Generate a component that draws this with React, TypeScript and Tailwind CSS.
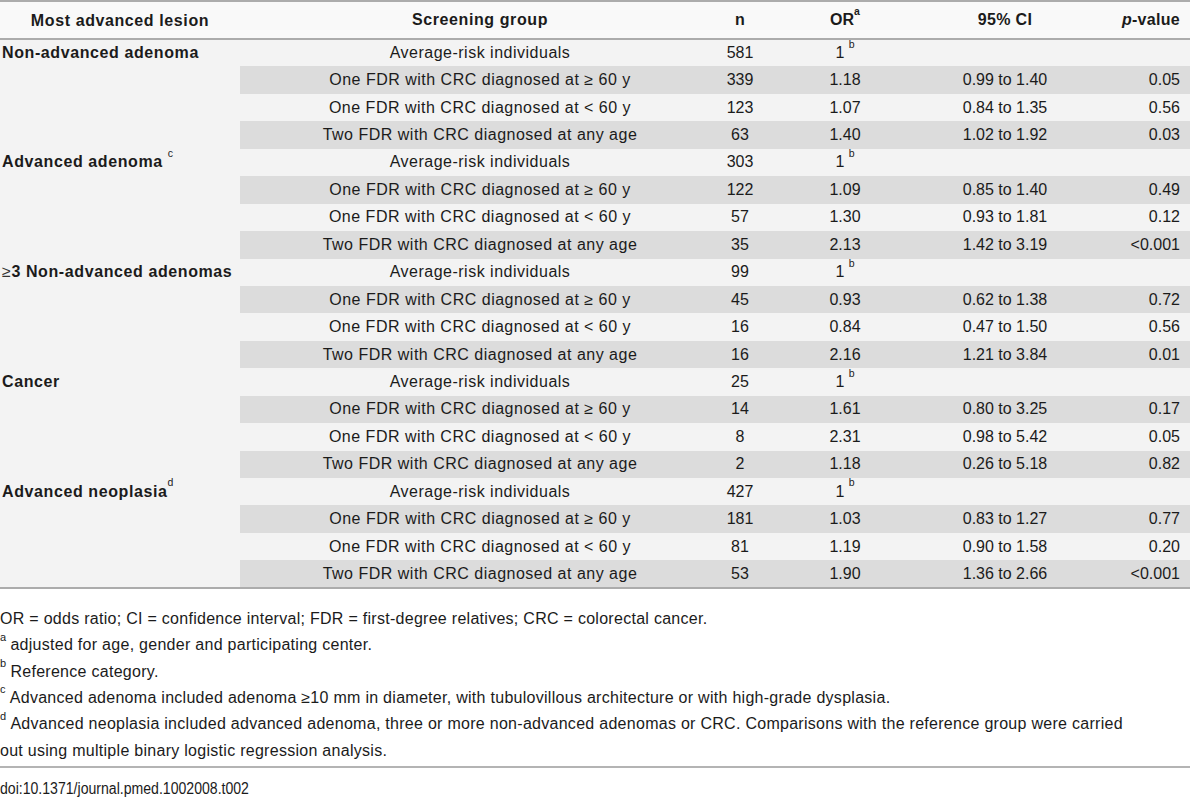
import React from "react";

type Row = { group: string; n: string; or: string; orSup?: boolean; ci: string; p: string };

const rowsFor = (d: string[][]): Row[] => [
  { group: "Average-risk individuals", n: d[0][0], or: "1", orSup: true, ci: "", p: "" },
  { group: "One FDR with CRC diagnosed at \u2265 60 y", n: d[1][0], or: d[1][1], ci: d[1][2], p: d[1][3] },
  { group: "One FDR with CRC diagnosed at < 60 y", n: d[2][0], or: d[2][1], ci: d[2][2], p: d[2][3] },
  { group: "Two FDR with CRC diagnosed at any age", n: d[3][0], or: d[3][1], ci: d[3][2], p: d[3][3] },
];

const groups: { label: React.ReactNode; rows: Row[] }[] = [
  {
    label: <>Non-advanced adenoma</>,
    rows: rowsFor([["581"], ["339", "1.18", "0.99 to 1.40", "0.05"], ["123", "1.07", "0.84 to 1.35", "0.56"], ["63", "1.40", "1.02 to 1.92", "0.03"]]),
  },
  {
    label: (
      <>
        Advanced adenoma <sup className="text-[10.5px] font-normal align-[5px]">c</sup>
      </>
    ),
    rows: rowsFor([["303"], ["122", "1.09", "0.85 to 1.40", "0.49"], ["57", "1.30", "0.93 to 1.81", "0.12"], ["35", "2.13", "1.42 to 3.19", "<0.001"]]),
  },
  {
    label: (
      <>
        <span className="font-normal text-[#333]">{"\u2265"}</span>3 Non-advanced adenomas
      </>
    ),
    rows: rowsFor([["99"], ["45", "0.93", "0.62 to 1.38", "0.72"], ["16", "0.84", "0.47 to 1.50", "0.56"], ["16", "2.16", "1.21 to 3.84", "0.01"]]),
  },
  {
    label: <>Cancer</>,
    rows: rowsFor([["25"], ["14", "1.61", "0.80 to 3.25", "0.17"], ["8", "2.31", "0.98 to 5.42", "0.05"], ["2", "1.18", "0.26 to 5.18", "0.82"]]),
  },
  {
    label: (
      <>
        Advanced neoplasia<sup className="text-[10.5px] font-normal align-[5px]">d</sup>
      </>
    ),
    rows: rowsFor([["427"], ["181", "1.03", "0.83 to 1.27", "0.77"], ["81", "1.19", "0.90 to 1.58", "0.20"], ["53", "1.90", "1.36 to 2.66", "<0.001"]]),
  },
];

function Sup({ c }: { c: string }) {
  return <sup className="text-[11px] align-[4px] mr-[4px]">{c}</sup>;
}

export default function App() {
  return (
    <div
      className="w-[1190px] h-[800px] bg-white overflow-hidden text-[#1b1b1b]"
      style={{ fontFamily: '"Liberation Sans", Arial, sans-serif' }}
    >
      <table className="w-[1190px] table-fixed border-collapse text-[16px]">
        <colgroup>
          <col className="w-[240px]" />
          <col className="w-[480px]" />
          <col className="w-[40px]" />
          <col className="w-[170px]" />
          <col className="w-[150px]" />
          <col className="w-[110px]" />
        </colgroup>
        <thead>
          <tr className="h-[38px] bg-[#f9f9f9] border-t-2 border-b-2 border-[#acacac]">
            <th className="text-center font-bold tracking-[0.6px] pt-[1px]">Most advanced lesion</th>
            <th className="text-center font-bold tracking-[0.6px]">Screening group</th>
            <th className="text-center font-bold">n</th>
            <th className="text-center font-bold">
              OR<sup className="text-[10.5px] align-[5px]">a</sup>
            </th>
            <th className="text-center font-bold tracking-[0.3px]">95% CI</th>
            <th className="text-right font-bold pr-[10px] tracking-[0.3px]">
              <i>p</i>-value
            </th>
          </tr>
        </thead>
        <tbody className="bg-[#f3f3f3]">
          {groups.map((g, gi) =>
            g.rows.map((r, ri) => {
              const stripe = ri % 2 === 1 ? "bg-[#dcdcdc]" : "";
              const last = gi === groups.length - 1 && ri === 3;
              return (
                <tr key={`${gi}-${ri}`} className={`h-[27.45px] ${last ? "border-b-2 border-[#acacac]" : ""}`}>
                  <td className="text-left font-bold pl-[2px] whitespace-nowrap tracking-[0.6px]">
                    {ri === 0 ? g.label : null}
                  </td>
                  <td className={`text-center whitespace-nowrap tracking-[0.5px] ${stripe}`}>{r.group}</td>
                  <td className={`text-center ${stripe}`}>{r.n}</td>
                  <td className={`text-center ${stripe}`}>
                    {r.or}
                    {r.orSup ? (
                      <>
                        {" "}
                        <sup className="text-[10.5px] align-[5px]">b</sup>
                      </>
                    ) : null}
                  </td>
                  <td className={`text-center ${stripe}`}>{r.ci}</td>
                  <td className={`text-right pr-[10px] ${stripe}`}>{r.p}</td>
                </tr>
              );
            })
          )}
        </tbody>
      </table>

      <div className="pt-[17px] text-[16px] leading-[26.4px] tracking-[0.28px]">
        <p>OR = odds ratio; CI = confidence interval; FDR = first-degree relatives; CRC = colorectal cancer.</p>
        <p>
          <Sup c="a" />
          adjusted for age, gender and participating center.
        </p>
        <p>
          <Sup c="b" />
          Reference category.
        </p>
        <p>
          <Sup c="c" />
          Advanced adenoma included adenoma {"\u2265"}10 mm in diameter, with tubulovillous architecture or with high-grade dysplasia.
        </p>
        <p>
          <Sup c="d" />
          Advanced neoplasia included advanced adenoma, three or more non-advanced adenomas or CRC. Comparisons with the reference group were carried
          <br />
          out using multiple binary logistic regression analysis.
        </p>
      </div>
      <div className="mt-[2px] border-t-2 border-[#b4b4b4] pt-[11px] text-[16px] leading-[20px]">
        <span className="inline-block origin-left scale-x-[0.88] whitespace-nowrap">doi:10.1371/journal.pmed.1002008.t002</span>
      </div>
    </div>
  );
}
